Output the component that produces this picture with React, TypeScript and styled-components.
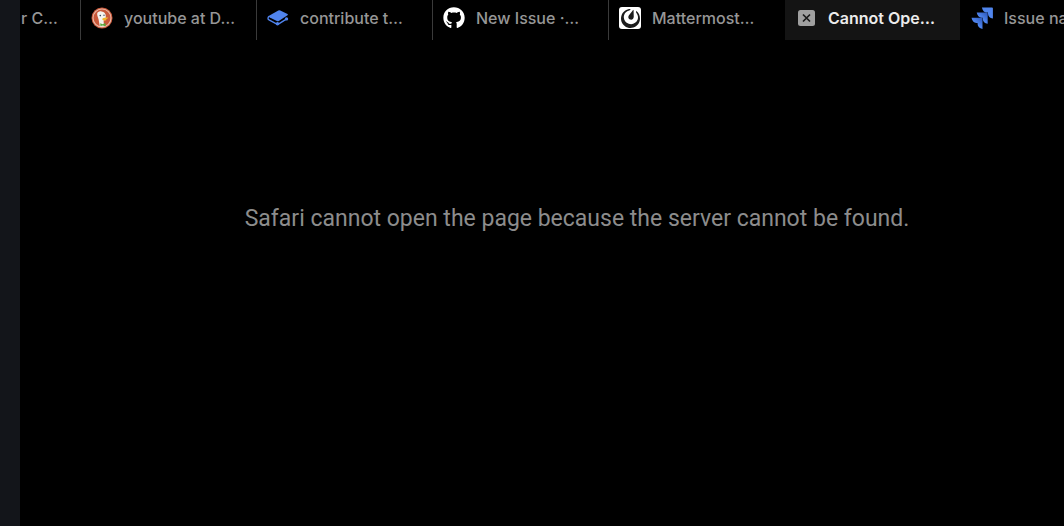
import React from "react";
import styled, { createGlobalStyle, css } from "styled-components";
import { FaGithub } from "react-icons/fa";
import { SiMattermost } from "react-icons/si";

const GlobalStyle = createGlobalStyle`
  *, *::before, *::after { box-sizing: border-box; }
  body {
    margin: 0;
    background: #000;
    font-family: Inter, "Liberation Sans", sans-serif;
  }
`;

const Shell = styled.div`
  display: flex;
  min-height: 100vh;
  background: #000;
`;

const Sidebar = styled.aside`
  flex: 0 0 20px;
  background: #13151a;
`;

const Browser = styled.div`
  flex: 1;
  min-width: 0;
  display: flex;
  flex-direction: column;
`;

const TabStrip = styled.nav`
  display: flex;
  height: 40px;
  overflow: hidden;
`;

const Tab = styled.button<{ $active?: boolean; $divided?: boolean; $clipped?: boolean }>`
  flex: 0 0 ${(p) => (p.$clipped ? 60 : 176)}px;
  display: flex;
  align-items: center;
  gap: 11px;
  margin: 0;
  padding: 0 0 4px ${(p) => (p.$clipped ? 0 : 10)}px;
  border: 0;
  border-left: 1px solid ${(p) => (p.$divided ? "#3a3a3a" : "transparent")};
  background: #000;
  background-clip: padding-box;
  color: #969696;
  font: 500 16px/20px Inter, "Liberation Sans", sans-serif;
  white-space: nowrap;
  text-align: left;
  ${(p) =>
    p.$active &&
    css`
      background-color: #141414;
      color: #ececec;
      font-weight: 600;
    `}
`;

const TabIcon = styled.span`
  flex: 0 0 22px;
  display: flex;
  justify-content: center;
  color: #fff;
`;

const Page = styled.main`
  flex: 1;
  padding: 164px 0 0 70px;
  text-align: center;
`;

const Message = styled.p`
  margin: 0;
  color: #8c8c8c;
  font-family: Roboto, "Liberation Sans", sans-serif;
  font-size: 23px;
  line-height: 30px;
`;

const DuckIcon = () => (
  <svg width="22" height="22" viewBox="0 0 22 22" aria-hidden="true">
    <circle cx="11" cy="11" r="10.5" fill="#c9583a" />
    <circle cx="11" cy="11" r="9" fill="none" stroke="#e9b9a8" strokeWidth="1.1" />
    <path
      d="M6.2 6.6C6.5 4.7 8.6 3.8 10.6 4.4c2.6.3 4.3 2 4.2 4.8l-.2 3.2-2 1.4.4 5.6c-1.400.6-3.400.3-4.200-.2L7.600 12.500C7 10 5.900 8.300 6.200 6.600z"
      fill="#f4f2ee"
    />
    <circle cx="9.300" cy="8.600" r=".8" fill="#33475d" />
    <circle cx="13" cy="8.200" r=".7" fill="#33475d" />
    <path d="M11.300 11.800c1.200-1.200 3.600-1.200 5.800-1.300.7.400-.8 1.300-2 1.700.7.500.1 1.400-1.200 1.400-1.500.1-3-.5-2.600-1.800z" fill="#f0b52d" />
    <path d="M9.200 16.300l2.500 1 2.700-1.200.3 3.100-2.800-.7-2.500.6z" fill="#57a83c" />
  </svg>
);

const BookIcon = () => (
  <svg width="22" height="22" viewBox="0 0 22 22" aria-hidden="true" fill="#5084ee">
    <path d="M1.200 9.300L11.300 3.400q1-.5 2 0l7.200 3.700q.9.500 0 1.100l-8.700 5.700q-1 .6-2 .1L2.800 10.500z" />
    <path
      d="M2.200 9.400C.6 10 .7 12.300 2 12.900l7.400 4q1.200.6 2.400-.1l7.500-4.600"
      fill="none"
      stroke="#5084ee"
      strokeWidth="1.400"
    />
    <circle cx="19.500" cy="11.900" r="1.700" />
    <circle cx="10.500" cy="16.800" r="1.700" />
  </svg>
);

const MattermostBadge = styled.span`
  display: flex;
  align-items: center;
  justify-content: center;
  width: 22px;
  height: 22px;
  border-radius: 3px;
  background: #fff;
  color: #1c1c1c;
`;

const CloseIcon = () => (
  <svg width="22" height="22" viewBox="0 0 22 22" aria-hidden="true">
    <rect x="3" y="3" width="17" height="16" rx="2.500" fill="#a0a0a0" />
    <path d="M8 7.500l7 7M15 7.500l-7 7" stroke="#1a1a1a" strokeWidth="1.700" />
  </svg>
);

const JiraIcon = () => (
  <svg width="22" height="22" viewBox="0 0 22 22" aria-hidden="true">
    <defs>
      <linearGradient id="jira-fold" x1="1" y1="0" x2="0.300" y2="0.800">
        <stop offset="0.100" stopColor="#2f5cc0" />
        <stop offset="0.700" stopColor="#5085ed" />
      </linearGradient>
    </defs>
    <path d="M.5 10.800H10.600q.9 0 .9.900V22C8.400 21.400 6.700 19.600 6.600 17.100V15.900H5.400C2.800 15.800 1.100 13.900.5 10.800z" fill="url(#jira-fold)" />
    <path d="M5.700 5.600H15.800q.9 0 .9.900V16.800C13.600 16.200 11.900 14.400 11.800 11.900V10.700H10.600C8 10.600 6.300 8.700 5.700 5.600z" fill="url(#jira-fold)" />
    <path d="M10.900.4H21q.9 0 .9.900V11.600C18.800 11 17.100 9.200 17 6.700V5.500H15.800C13.200 5.400 11.500 3.500 10.900.4z" fill="#5085ed" />
  </svg>
);

const tabs = [
  { label: "youtube at D…", icon: <DuckIcon />, divided: true },
  { label: "contribute t…", icon: <BookIcon />, divided: true },
  { label: "New Issue ·…", icon: <FaGithub size={22} />, divided: true },
  { label: "Mattermost…", icon: <MattermostBadge><SiMattermost size={19} /></MattermostBadge>, divided: true },
  { label: "Cannot Ope…", icon: <CloseIcon />, active: true },
  { label: "Issue na", icon: <JiraIcon /> },
];

export default function App() {
  return (
    <>
      <GlobalStyle />
      <Shell>
        <Sidebar />
        <Browser>
          <TabStrip aria-label="Open tabs">
            <Tab type="button" $clipped>r C…</Tab>
            {tabs.map((tab) => (
              <Tab key={tab.label} type="button" $active={tab.active} $divided={tab.divided}>
                <TabIcon>{tab.icon}</TabIcon>
                {tab.label}
              </Tab>
            ))}
          </TabStrip>
          <Page>
            <Message>Safari cannot open the page because the server cannot be found.</Message>
          </Page>
        </Browser>
      </Shell>
    </>
  );
}
